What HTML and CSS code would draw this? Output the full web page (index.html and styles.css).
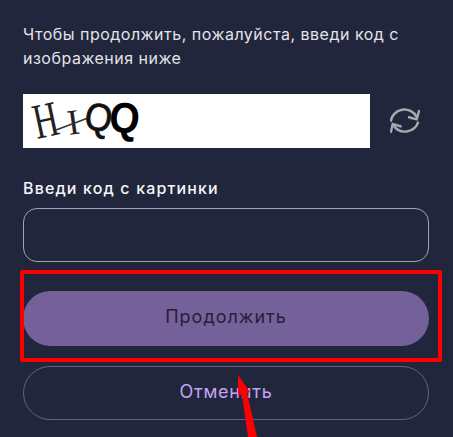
FILE: index.html
```html
<!DOCTYPE html>
<html lang="ru">
<head>
<meta charset="utf-8">
<title>Код с картинки</title>
<link rel="stylesheet" href="styles.css">
</head>
<body>
<main class="form">
  <p class="intro">Чтобы продолжить, пожалуйста, введи код с изображения ниже</p>
  <div class="captcha-row">
    <div class="captcha">
      <svg class="captcha-art" width="347" height="54" viewBox="0 0 347 54">
        <text class="cap-thin" transform="translate(14 45) rotate(-12) scale(.85 1.25)">H</text>
        <text class="cap-thin cap-i" transform="translate(46 41) rotate(-8)">I</text>
        <line class="cap-line" x1="33" y1="36" x2="65" y2="24"/>
        <text class="cap-mid" transform="translate(60 34) rotate(10) scale(1 1.1)">Q</text>
        <text class="cap-bold" transform="translate(85 37) rotate(6) scale(1 1.1)">Q</text>
      </svg>
    </div>
    <svg class="refresh" width="30" height="30" viewBox="0 0 30 30">
      <path d="M.7 15.700A13.800 13.800 0 0 1 26.700 11"/>
      <path d="M28.300 15.700A13.800 13.800 0 0 1 3.300 19"/>
      <path d="M29.300 4 26.700 13.300 18 11"/>
      <path d="M.7 26.700 2.700 18 11.700 20.700"/>
    </svg>
  </div>
  <label class="label" for="code">Введи код с картинки</label>
  <input class="input" id="code" type="text">
  <button class="btn btn-primary" type="button">Продолжить</button>
  <button class="btn btn-secondary" type="button">Отменить</button>
</main>
<div class="mark-box"></div>
<svg class="mark-arrow" width="26" height="62" viewBox="0 0 26 62">
  <path d="M4 0 16 17 13 18 23 62 14 62 8 20 4 20Z"/>
</svg>
</body>
</html>
```
FILE: styles.css
```css
* { box-sizing: border-box; }
html, body { margin: 0; height: 100%; }
body {
  background: #22263c;
  font-family: Inter, "Noto Sans", sans-serif;
  overflow: hidden;
  position: relative;
}
.form {
  display: flex;
  flex-direction: column;
  padding: 22px 24px 0 23px;
}
.intro {
  margin: 0;
  color: #e3e3ea;
  font-size: 16px;
  line-height: 24px;
  letter-spacing: 0.5px;
  width: 385px;
}
.captcha-row {
  display: flex;
  align-items: center;
  gap: 20px;
  margin-top: 24px;
}
.captcha {
  width: 347px;
  height: 54px;
  background: #fff;
  flex: none;
}
.captcha-art { display: block; }
.cap-thin { font: 40px "Liberation Serif", serif; fill: #222; }
.cap-i { font-size: 36px; }
.cap-line { stroke: #333; stroke-width: 1.5; }
.cap-mid { font: 35px "Liberation Sans", sans-serif; fill: #111; stroke: #111; stroke-width: .8; }
.cap-bold { font: 700 39px "Liberation Sans", sans-serif; fill: #000; }
.refresh { fill: none; stroke: #a9a9b0; stroke-width: 2.4; flex: none; }
.label {
  margin-top: 29px;
  color: #f5f5f8;
  font-size: 16px;
  font-weight: 500;
  line-height: 22px;
  letter-spacing: 1.15px;
}
.input {
  margin-top: 9px;
  height: 54px;
  background: transparent;
  border: 1px solid #a4a4b0;
  border-radius: 14px;
}
.btn {
  display: block;
  width: 100%;
  font-family: inherit;
  font-size: 18px;
  letter-spacing: 1px;
  border-radius: 28px;
  padding: 0 0 4px;
}
.btn-primary {
  margin-top: 29px;
  height: 55px;
  border: none;
  background: #74619a;
  color: #252038;
}
.btn-secondary {
  margin-top: 20px;
  height: 54px;
  background: transparent;
  border: 1px solid #6c5b91;
  color: #c3a4f5;
  letter-spacing: .8px;
}
.mark-box {
  position: absolute;
  left: 20px;
  top: 270px;
  width: 422px;
  height: 92px;
  border: 4px solid #fe0000;
  border-radius: 2px;
}
.mark-arrow {
  position: absolute;
  left: 234px;
  top: 375px;
  fill: #fe0000;
}
```
